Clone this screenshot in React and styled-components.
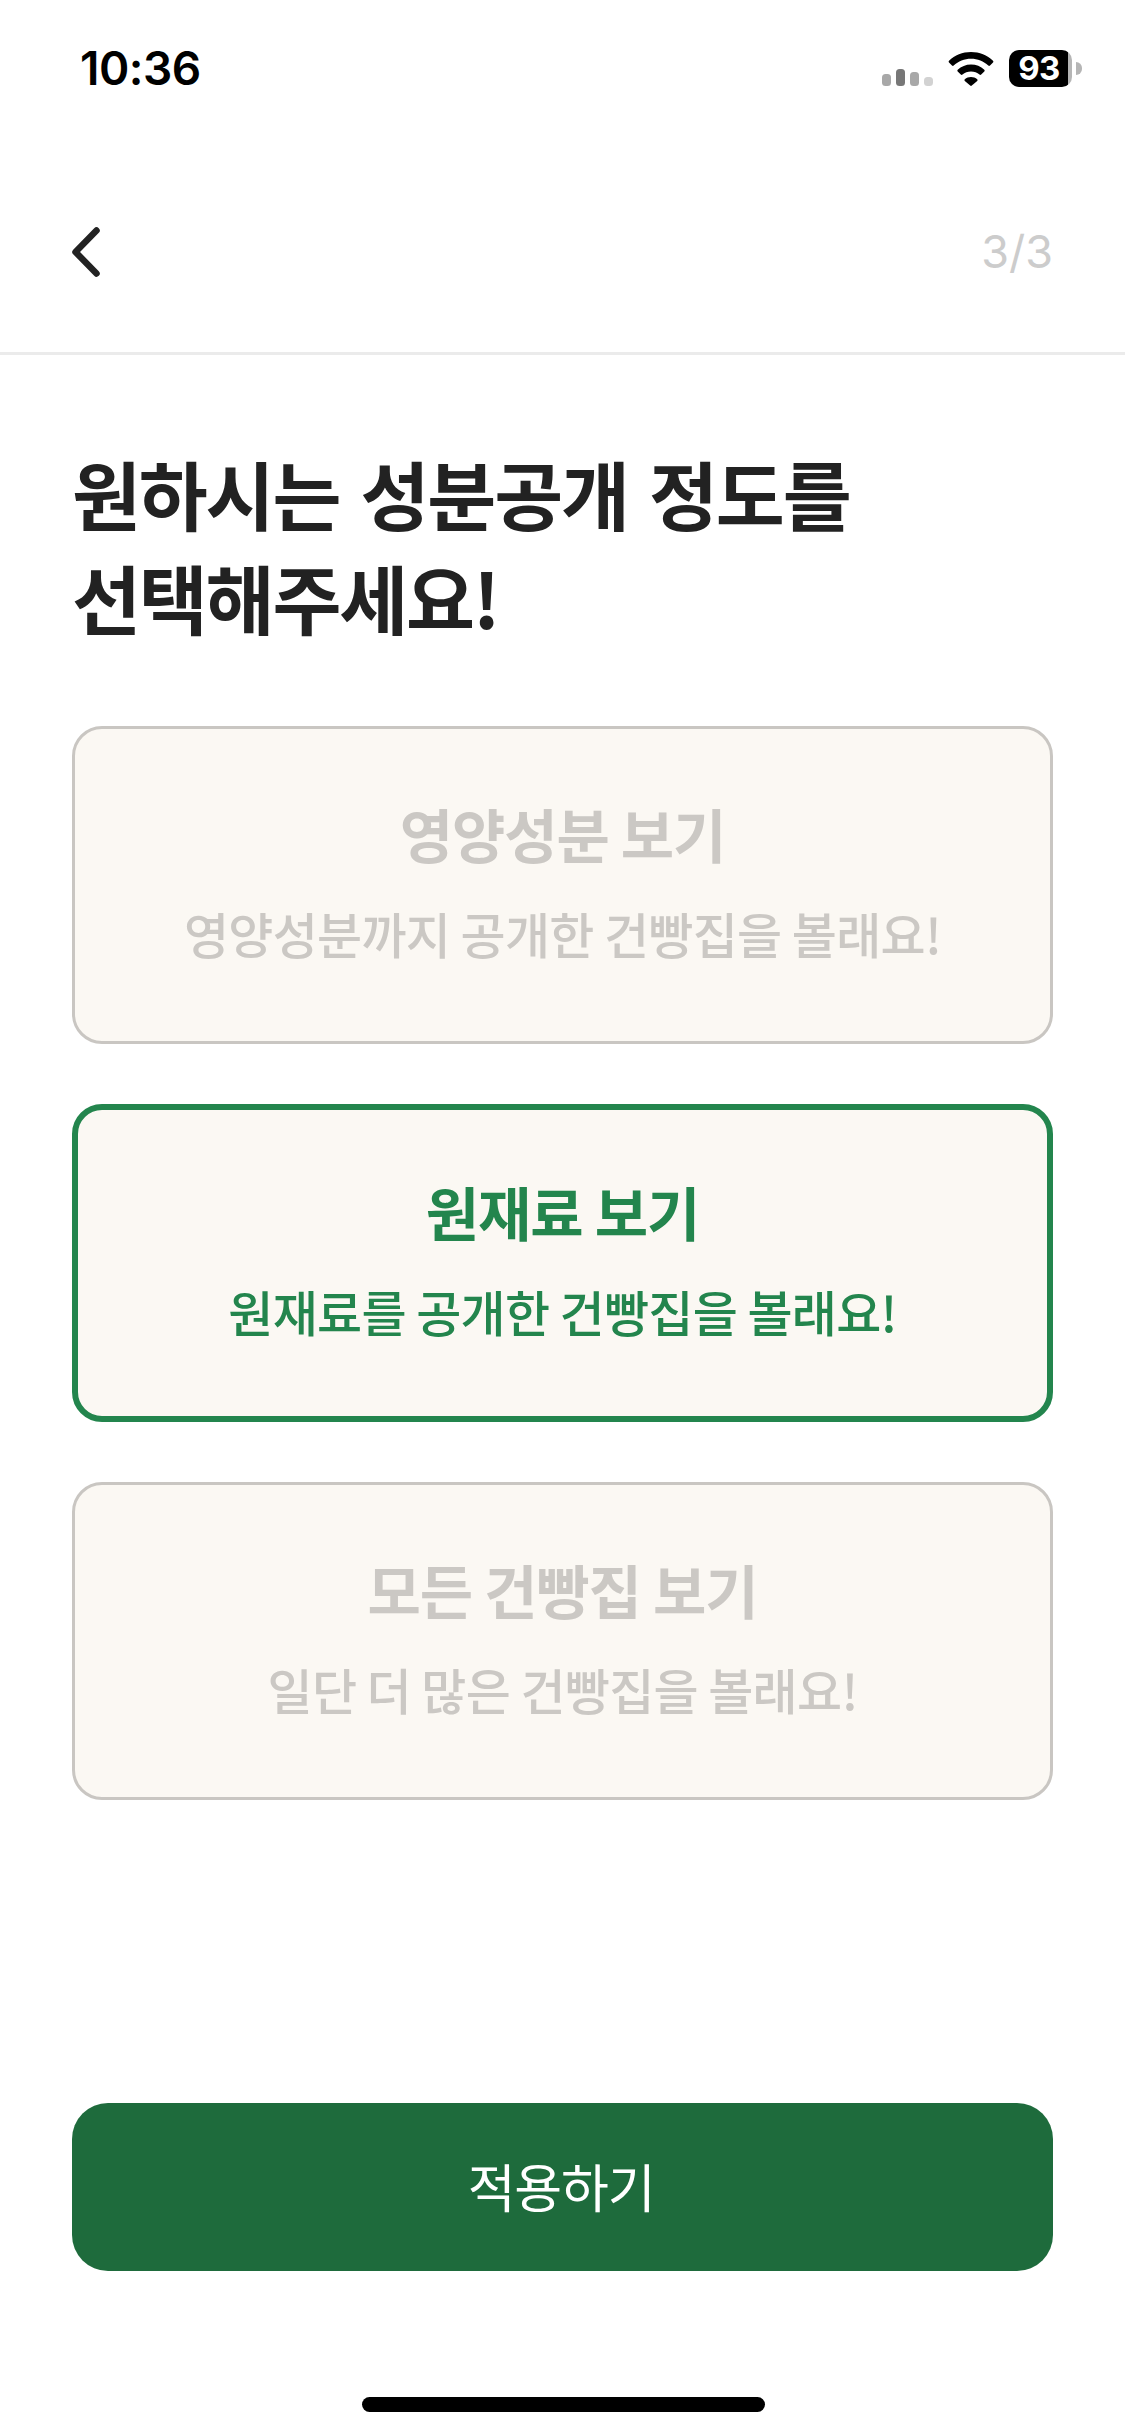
import React from 'react'
import styled, { createGlobalStyle } from 'styled-components'

const GlobalStyle = createGlobalStyle`
    html, body {
        margin: 0;
        padding: 0;
        background: #fff;
    }
    * {
        box-sizing: border-box;
    }
`

const Page = styled.div`
    width: 1125px;
    height: 2436px;
    display: flex;
    flex-direction: column;
    position: relative;
    overflow: hidden;
    background: #fff;
    font-family: "Noto Sans CJK KR", "Noto Sans", sans-serif;
`

const StatusBar = styled.div`
    height: 150px;
    flex: none;
    display: flex;
    justify-content: space-between;
    align-items: flex-start;
    padding: 41px 53px 0 80px;
`

const Time = styled.div`
    font-family: Inter, sans-serif;
    font-size: 46px;
    font-weight: 600;
    line-height: 54px;
    letter-spacing: -0.5px;
    color: #000;
`

const StatusIcons = styled.div`
    display: flex;
    align-items: flex-end;
    margin-top: 9px;
`

const Battery = styled.div`
    width: 63px;
    height: 37px;
    margin-left: 15px;
    position: relative;
    border-radius: 10px;
    display: flex;
    align-items: center;
    justify-content: center;
    padding-right: 3px;
    background: linear-gradient(to right, #000 93%, #b5b5b5 93%);
    color: #fff;
    font-family: Inter, sans-serif;
    font-size: 33px;
    font-weight: 700;
    line-height: 37px;
    letter-spacing: -0.5px;
    &::after {
        content: "";
        position: absolute;
        right: -10px;
        top: 12px;
        width: 6px;
        height: 13px;
        border-radius: 0 6px 6px 0;
        background: #b5b5b5;
    }
`

const Header = styled.div`
    height: 205px;
    flex: none;
    display: flex;
    justify-content: space-between;
    align-items: center;
    padding: 0 72px;
    border-bottom: 3px solid #ebebeb;
`

const BackButton = styled.div`
    display: flex;
    margin-top: 1px;
`

const Step = styled.div`
    font-family: Inter, sans-serif;
    font-size: 45px;
    line-height: 50px;
    color: #cccccc;
    margin-top: 1px;
`

const Content = styled.div`
    flex: 1;
    display: flex;
    flex-direction: column;
    padding: 86px 72px 0;
`

const Title = styled.h1`
    margin: 0 0 77px;
    font-size: 75px;
    font-weight: 700;
    line-height: 104px;
    letter-spacing: -2.2px;
    word-spacing: 6.5px;
    color: #222;
`

const Options = styled.div`
    display: flex;
    flex-direction: column;
    gap: 60px;
`

const Option = styled.div`
    height: 318px;
    display: flex;
    flex-direction: column;
    align-items: center;
    justify-content: center;
    gap: 24px;
    padding-bottom: 12px;
    border-radius: 30px;
    background: #fbf8f3;
    border: ${p => (p.$active ? '6px solid #23854d' : '3px solid #c9c6c2')};
    color: ${p => (p.$active ? '#23854d' : '#cbc8c4')};
`

const OptionTitle = styled.div`
    font-size: 58px;
    font-weight: 700;
    line-height: 84px;
    letter-spacing: -1.1px;
`

const OptionText = styled.div`
    font-size: 49px;
    font-weight: 500;
    line-height: 68px;
    letter-spacing: -0.7px;
`

const Footer = styled.div`
    padding: 0 72px 165px;
`

const ApplyButton = styled.div`
    height: 168px;
    display: flex;
    align-items: center;
    justify-content: center;
    padding: 0 3px 3px 0;
    border-radius: 36px;
    background: #1e6b3c;
    color: #fff;
    font-size: 52px;
    font-weight: 400;
    letter-spacing: -1.2px;
`

const HomeIndicator = styled.div`
    position: absolute;
    left: 362px;
    bottom: 24px;
    width: 403px;
    height: 15px;
    border-radius: 8px;
    background: #000;
`

const SignalIcon = () => (
    <svg width="52" height="18" viewBox="0 0 52 18">
        <rect x="0" y="5" width="9" height="12" rx="3.5" fill="#a8a8a8" />
        <rect x="14" y="0" width="9" height="17" rx="3.5" fill="#777" />
        <rect x="28" y="3" width="9" height="14" rx="3.5" fill="#a8a8a8" />
        <rect x="42" y="8" width="9" height="9" rx="3.5" fill="#d2d2d2" />
    </svg>
)

const WifiIcon = () => (
    <svg width="46" height="34" viewBox="0 0 46 34" style={{ marginLeft: 14, marginBottom: 1 }}>
        <path d="M23 0C14.5 0 6.8 3.3 1 8.7c-.5.5-.5 1.2 0 1.7l3 3.2c.5.5 1.2.5 1.7 0C10.3 9.4 16.4 6.8 23 6.8s12.7 2.6 17.3 6.8c.5.5 1.2.5 1.7 0l3-3.2c.5-.5.5-1.2 0-1.7C39.2 3.3 31.5 0 23 0z" fill="#000" />
        <path d="M23 12.6c-5.1 0-9.8 2-13.3 5.1-.5.5-.5 1.2 0 1.7l3.1 3.2c.5.5 1.2.5 1.7 0 2.3-2 5.2-3.2 8.5-3.2s6.2 1.2 8.5 3.2c.5.5 1.2.5 1.7 0l3.1-3.2c.5-.5.5-1.2 0-1.7-3.5-3.2-8.2-5.1-13.3-5.1z" fill="#000" />
        <path d="M23 25c-2.4 0-4.6.9-6.2 2.3-.5.5-.5 1.2 0 1.7l5.4 4.6c.5.4 1.1.4 1.6 0l5.4-4.6c.5-.5.5-1.2 0-1.7C27.6 25.9 25.4 25 23 25z" fill="#000" />
    </svg>
)

const ChevronIcon = () => (
    <svg width="28" height="50" viewBox="0 0 28 50" fill="none">
        <path d="M24.5 3.5 L3.5 25 L24.5 46.5" stroke="#222" strokeWidth="6.5" strokeLinecap="round" strokeLinejoin="round" />
    </svg>
)

const options = [
    { title: '영양성분 보기', text: '영양성분까지 공개한 건빵집을 볼래요!' },
    { title: '원재료 보기', text: '원재료를 공개한 건빵집을 볼래요!', active: true },
    { title: '모든 건빵집 보기', text: '일단 더 많은 건빵집을 볼래요!' },
]

function App() {
    return (
        <Page>
            <GlobalStyle />
            <StatusBar>
                <Time>10:36</Time>
                <StatusIcons>
                    <SignalIcon />
                    <WifiIcon />
                    <Battery>93</Battery>
                </StatusIcons>
            </StatusBar>
            <Header>
                <BackButton>
                    <ChevronIcon />
                </BackButton>
                <Step>3/3</Step>
            </Header>
            <Content>
                <Title>
                    원하시는 성분공개 정도를
                    <br />
                    선택해주세요!
                </Title>
                <Options>
                    {options.map(option => (
                        <Option key={option.title} $active={option.active}>
                            <OptionTitle>{option.title}</OptionTitle>
                            <OptionText>{option.text}</OptionText>
                        </Option>
                    ))}
                </Options>
            </Content>
            <Footer>
                <ApplyButton>적용하기</ApplyButton>
            </Footer>
            <HomeIndicator />
        </Page>
    )
}

export default App
